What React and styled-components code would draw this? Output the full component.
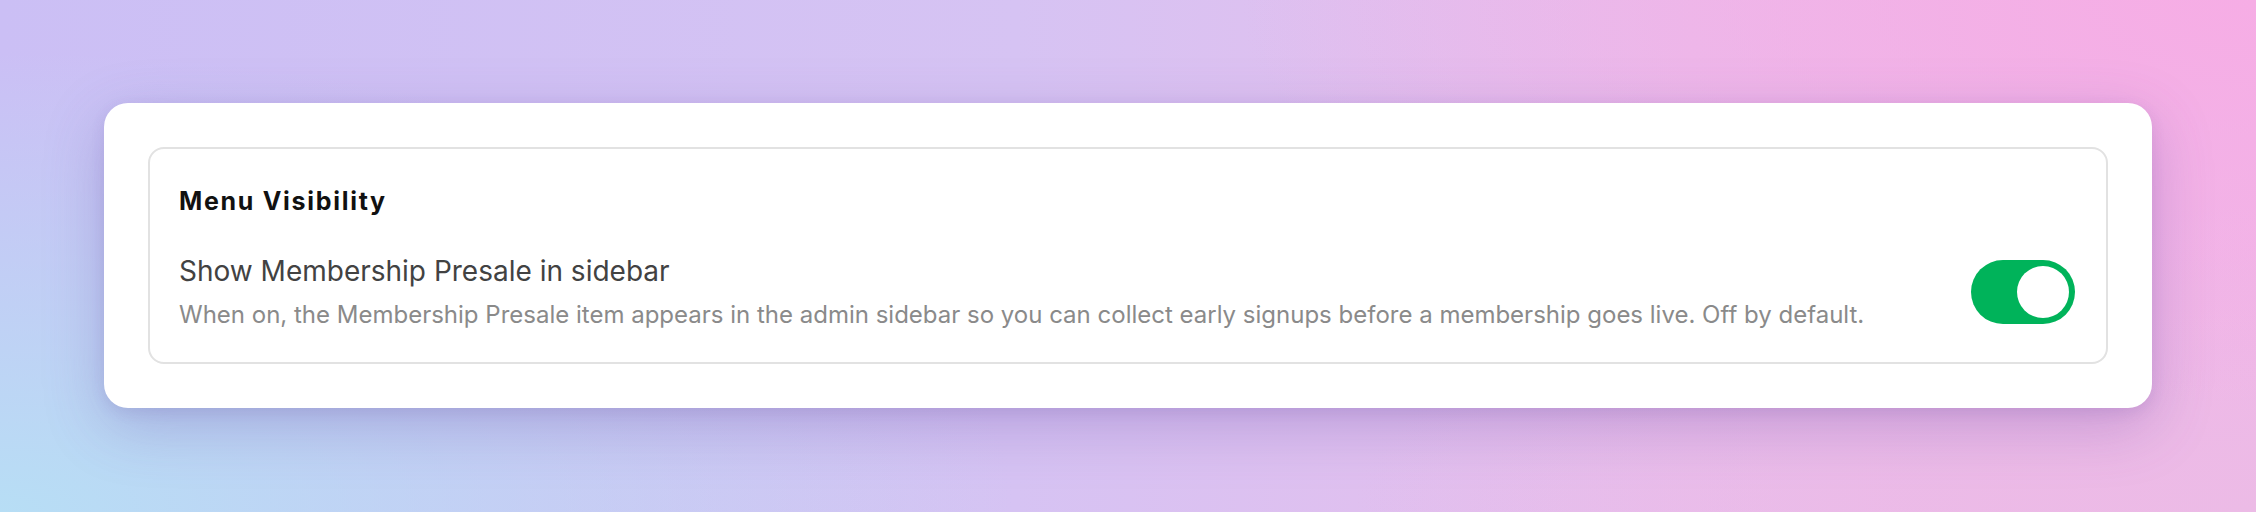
import React, { useState } from 'react';
import styled, { createGlobalStyle } from 'styled-components';

const GlobalStyle = createGlobalStyle`
  html, body {
    margin: 0;
    padding: 0;
  }
  body {
    font-family: Inter, "Liberation Sans", sans-serif;
    -webkit-font-smoothing: antialiased;
  }
`;

const Page = styled.div`
  box-sizing: border-box;
  width: 2256px;
  height: 512px;
  padding: 103px 104px;
  background:
    radial-gradient(ellipse 45% 90% at 0% 100%, #b7def5 0%, rgba(183, 222, 245, 0) 100%),
    radial-gradient(ellipse 45% 80% at 100% 0%, #f6ade5 0%, rgba(246, 173, 229, 0) 100%),
    radial-gradient(ellipse 40% 60% at 100% 100%, #ecbbe6 0%, rgba(236, 187, 230, 0) 100%),
    linear-gradient(90deg, #cbbff5 0%, #d6c3f3 45%, #e8bdec 75%, #f0b6e8 100%);
`;

const Card = styled.section`
  box-sizing: border-box;
  height: 305px;
  padding: 44px;
  background: #ffffff;
  border-radius: 24px;
  box-shadow: 0 18px 60px rgba(96, 70, 160, 0.28), 0 4px 14px rgba(96, 70, 160, 0.12);
`;

const Group = styled.div`
  box-sizing: border-box;
  height: 100%;
  padding: 37px 31px 0 29px;
  border: 2px solid #e2e2e2;
  border-radius: 16px;
`;

const GroupTitle = styled.h3`
  margin: 0 0 38px;
  font-family: Inter, "Liberation Sans", sans-serif;
  font-size: 25px;
  line-height: 30px;
  font-weight: 700;
  letter-spacing: 1.7px;
  color: #111111;
`;

const Row = styled.div`
  display: flex;
  align-items: center;
  justify-content: space-between;
  gap: 40px;
`;

const Text = styled.div`
  display: flex;
  flex-direction: column;
  gap: 12px;
`;

const Label = styled.div`
  font-size: 28px;
  line-height: 34px;
  font-weight: 400;
  color: #424242;
`;

const Hint = styled.div`
  font-size: 24px;
  line-height: 30px;
  color: #8a8a8a;
`;

const Switch = styled.button`
  position: relative;
  flex: none;
  width: 104px;
  height: 64px;
  padding: 0;
  border: none;
  border-radius: 32px;
  background: ${(p) => (p.$on ? '#00b35a' : '#d4d4d8')};
  cursor: pointer;

  &::after {
    content: '';
    position: absolute;
    top: 6px;
    left: ${(p) => (p.$on ? '46px' : '6px')};
    width: 52px;
    height: 52px;
    border-radius: 50%;
    background: #ffffff;
    transition: left 0.15s ease;
  }
`;

export default function App() {
  const [on, setOn] = useState(true);
  return (
    <>
      <GlobalStyle />
      <Page>
        <Card>
          <Group>
            <GroupTitle>Menu Visibility</GroupTitle>
            <Row>
              <Text>
                <Label>Show Membership Presale in sidebar</Label>
                <Hint>
                  When on, the Membership Presale item appears in the admin sidebar so you can
                  collect early signups before a membership goes live. Off by default.
                </Hint>
              </Text>
              <Switch
                type="button"
                role="switch"
                aria-checked={on}
                $on={on}
                onClick={() => setOn(!on)}
              />
            </Row>
          </Group>
        </Card>
      </Page>
    </>
  );
}
